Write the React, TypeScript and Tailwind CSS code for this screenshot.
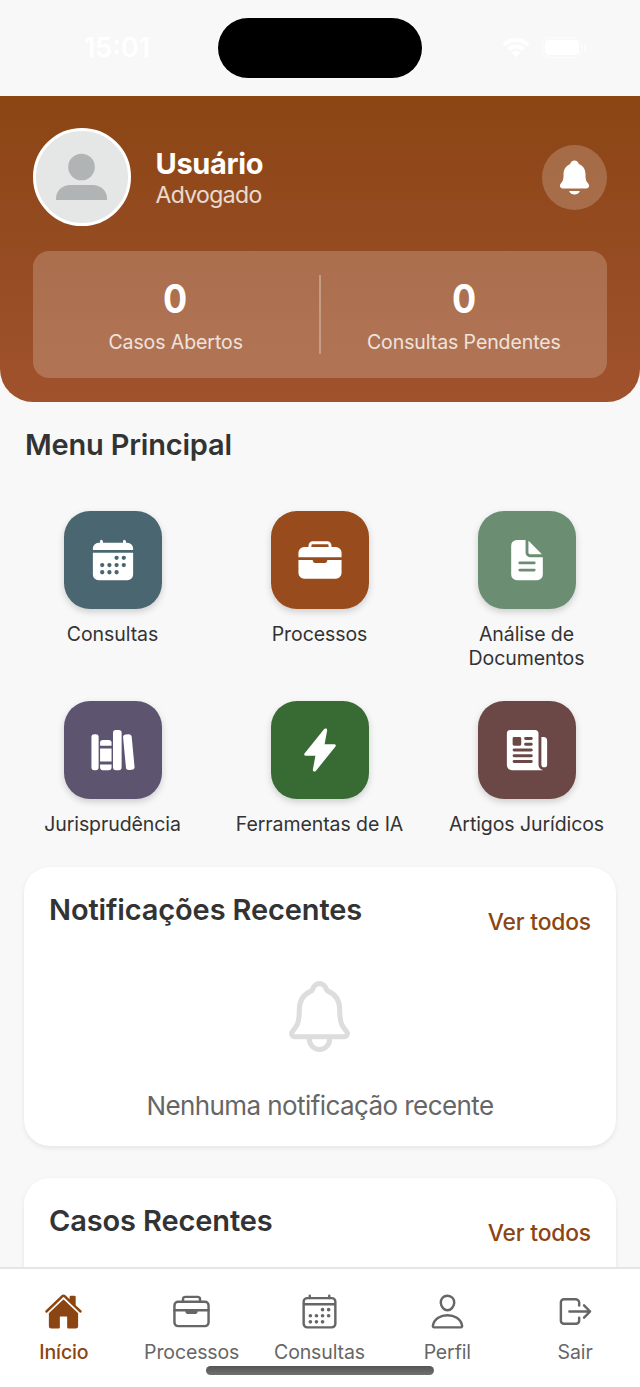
import type { IconType } from "react-icons";
import {
  IoBriefcase,
  IoBriefcaseOutline,
  IoCalendar,
  IoCalendarOutline,
  IoDocumentText,
  IoFlash,
  IoHome,
  IoLibrary,
  IoLogOutOutline,
  IoNewspaper,
  IoNotifications,
  IoNotificationsOutline,
  IoPersonOutline,
} from "react-icons/io5";

const App = () => {
  return (
    <div className="flex h-[1387px] w-[640px] flex-col overflow-hidden bg-[#f8f8f8] font-['Inter',sans-serif] text-[#333]">
      <StatusBar />
      <Header />
      <main className="min-h-0 flex-1 overflow-hidden px-[24px]">
        <MainMenu />
        <SectionCard title="Notificações Recentes">
          <div className="flex flex-col items-center pt-[40px]">
            <IoNotificationsOutline className="mr-px size-[81px] text-[#dddddd]" />
            <p className="mt-[32px] text-[26px] leading-[34px] tracking-[-0.58px] text-[#666]">
              Nenhuma notificação recente
            </p>
          </div>
        </SectionCard>
        <SectionCard title="Casos Recentes" />
      </main>
      <TabBar />
    </div>
  );
};

const StatusBar = () => {
  return (
    <div className="flex h-24 shrink-0 items-center justify-between">
      <span className="w-[218px] pl-4 text-center text-[27px] font-semibold leading-8 text-white">15:01</span>
      <div className="h-[60px] w-[204px] rounded-full bg-black" />
      <div className="flex w-[218px] items-center pb-px pl-[41px]">
        <span className="mt-4 flex gap-[7px]">
          <i className="size-0.5 rounded-full bg-white" />
          <i className="size-0.5 rounded-full bg-white" />
          <i className="size-0.5 rounded-full bg-white" />
          <i className="size-0.5 rounded-full bg-white" />
        </span>
        <svg viewBox="0 0 28 20" className="ml-[10px] h-5 w-7 fill-white">
          <path d="M14 0C8.7 0 3.900 2.100.5 5.400l2.700 2.800C6 5.500 9.800 4 14 4s8 1.500 10.800 4.200l2.700-2.800C24.100 2.100 19.300 0 14 0z" />
          <path d="M14 6.500c-3.500 0-6.700 1.400-9 3.600l2.800 2.800c1.600-1.500 3.800-2.400 6.200-2.400s4.600.9 6.200 2.400l2.800-2.800c-2.300-2.200-5.500-3.600-9-3.600z" />
          <path d="M14 13c-1.700 0-3.200.7-4.300 1.700L14 19.500l4.300-4.800C17.200 13.700 15.700 13 14 13z" />
        </svg>
        <div className="ml-3 h-[21px] w-10 rounded-[7px] border border-white/60 p-[2px]">
          <div className="h-full rounded-[4px] bg-white" />
        </div>
        <div className="ml-0.5 h-[7px] w-0.5 rounded-r-full bg-white/60" />
      </div>
    </div>
  );
};

const Header = () => {
  return (
    <header className="h-[306px] shrink-0 rounded-b-[33px] bg-linear-to-b from-[#8b4513] to-[#a0522d] pl-[32.5px] pr-[33px] pt-[32px] text-white">
      <div className="flex items-center">
        <div className="size-[98px] overflow-hidden rounded-full border-[3px] border-white bg-[#e5e7e6]">
          <svg viewBox="0 0 92 92" className="size-full fill-[#b0b4b5]">
            <circle cx="45.500" cy="36" r="13.300" />
            <path d="M20 69v-1.500C20 59.500 26.500 54 34.500 54h22c8 0 14.500 5.500 14.500 13.500V69z" />
          </svg>
        </div>
        <div className="ml-[25px] flex-1">
          <h1 className="text-[29px] font-bold leading-[35px] tracking-[-0.35px]">Usuário</h1>
          <p className="text-[23px] leading-[28px] tracking-[-0.65px] text-white/80">Advogado</p>
        </div>
        <button className="flex size-[65px] items-center justify-center rounded-full bg-white/20">
          <IoNotifications className="size-[39px]" />
        </button>
      </div>
      <div className="mt-[25px] flex h-[127px] items-center rounded-2xl bg-white/20">
        <Stat value="0" label="Casos Abertos" />
        <div className="h-[79px] w-[2px] bg-white/30" />
        <Stat value="0" label="Consultas Pendentes" />
      </div>
    </header>
  );
};

const Stat = ({ value, label }: { value: string; label: string }) => {
  return (
    <div className="flex flex-1 flex-col items-center">
      <span className="scale-x-92 text-[39px] font-bold leading-[47px]">{value}</span>
      <span className="mt-[8px] text-[19.500px] leading-[24px] tracking-[-0.08px] text-white/80">{label}</span>
    </div>
  );
};

const MainMenu = () => {
  return (
    <section className="pt-[25px]">
      <h2 className="pl-px text-[29px] font-semibold leading-[35px] tracking-[-0.2px]">Menu Principal</h2>
      <div className="mt-[49px] flex flex-wrap justify-between pr-px">
        {menu.map((item) => (
          <div key={item.label} className="mb-[31px] flex w-[177px] flex-col items-center">
            <div
              className={`flex size-[98px] items-center justify-center rounded-[26px] shadow-[0_3px_7px_rgba(0,0,0,0.17)] ${item.color}`}
            >
              <item.icon className="size-[46px] text-white" />
            </div>
            <p className="mt-[14px] text-center text-[19.500px] leading-[23.500px] tracking-[-0.08px]">
              {item.lines.map((line) => (
                <span key={line} className="block whitespace-nowrap">
                  {line}
                </span>
              ))}
            </p>
          </div>
        ))}
      </div>
    </section>
  );
};

const SectionCard = ({ title, children }: { title: string; children?: React.ReactNode }) => {
  return (
    <section className="-mt-px mb-[33px] h-[279px] rounded-[26px] bg-white px-[25px] pt-[25px] shadow-[0_2px_5px_rgba(0,0,0,0.08)]">
      <div className="flex justify-between">
        <h2 className="text-[29px] font-semibold leading-[35px] tracking-[-0.13px]">{title}</h2>
        <a className="mt-[16px] text-[22.800px] font-medium leading-[28px] tracking-[-0.15px] text-[#8b4513]">
          Ver todos
        </a>
      </div>
      {children}
    </section>
  );
};

const TabBar = () => {
  return (
    <nav className="relative flex h-[120px] shrink-0 border-t-2 border-[#e5e5e5] bg-white pt-[23px]">
      {tabs.map((tab) => (
        <div
          key={tab.label}
          className={`flex w-[127.800px] flex-col items-center ${tab.active ? "font-medium text-[#8b4513]" : "text-[#666]"}`}
        >
          <tab.icon className="size-[39px]" />
          <span className="mt-[9px] text-[19.500px] leading-[24px] tracking-[-0.12px]">{tab.label}</span>
        </div>
      ))}
      <div className="absolute bottom-[12px] left-[206px] h-[9px] w-[228px] rounded-full bg-linear-to-b from-[#555] to-[#707070]" />
    </nav>
  );
};

export default App;

type MenuItem = {
  label: string;
  lines: string[];
  icon: IconType;
  color: string;
};

const menu: MenuItem[] = [
  {
    label: "Consultas",
    lines: ["Consultas"],
    icon: IoCalendar,
    color: "bg-[#4a6670]",
  },
  {
    label: "Processos",
    lines: ["Processos"],
    icon: IoBriefcase,
    color: "bg-[#984b1c]",
  },
  {
    label: "Análise de Documentos",
    lines: ["Análise de", "Documentos"],
    icon: IoDocumentText,
    color: "bg-[#6b8e73]",
  },
  {
    label: "Jurisprudência",
    lines: ["Jurisprudência"],
    icon: IoLibrary,
    color: "bg-[#5d5470]",
  },
  {
    label: "Ferramentas de IA",
    lines: ["Ferramentas de IA"],
    icon: IoFlash,
    color: "bg-[#386b33]",
  },
  {
    label: "Artigos Jurídicos",
    lines: ["Artigos Jurídicos"],
    icon: IoNewspaper,
    color: "bg-[#6b4846]",
  },
];

type Tab = {
  label: string;
  icon: IconType;
  active?: boolean;
};

const tabs: Tab[] = [
  { label: "Início", icon: IoHome, active: true },
  { label: "Processos", icon: IoBriefcaseOutline },
  { label: "Consultas", icon: IoCalendarOutline },
  { label: "Perfil", icon: IoPersonOutline },
  { label: "Sair", icon: IoLogOutOutline },
];
